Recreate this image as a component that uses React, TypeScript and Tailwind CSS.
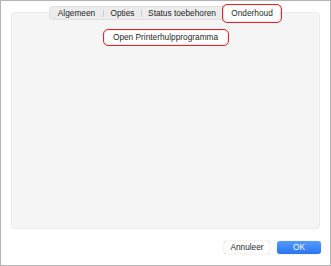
const tabs = [
  { label: "Algemeen", width: "w-[53px]" },
  { label: "Opties", width: "w-[37px]" },
  { label: "Status toebehoren", width: "w-[80px]" },
];

export default function App() {
  return (
    <div
      className="w-[331px] h-[266px] bg-white border border-[#b4b4b4] flex flex-col text-[#1f1f1f]"
      style={{ fontFamily: '"Liberation Sans", Arial, sans-serif' }}
    >
      <div className="ml-[10px] mt-[11px] w-[309px] h-[217px] rounded-[4px] bg-[#f5f5f5] border border-[#ebebeb] flex flex-col items-center">
        <div className="-mt-[7px] h-[14px] flex items-center rounded-[4px] bg-[#ececec] border border-[#e0e0e0] text-[8.3px]">
          {tabs.map((tab, i) => (
            <div key={tab.label} className="flex items-center h-full">
              {i > 0 && <div className="w-px h-[7px] bg-[#cfcfcf]" />}
              <div className={`${tab.width} text-center leading-none`}>{tab.label}</div>
            </div>
          ))}
          <div className="w-[56px] h-[15px] ml-[2px] mr-[1px] flex items-center justify-center bg-white rounded-[3px] shadow-[0_0_1px_rgba(0,0,0,0.35)] outline-[1.5px] outline-[#e3232a] outline-offset-[1.5px] leading-none">
            Onderhoud
          </div>
        </div>
        <button className="mt-[11px] w-[122px] h-[13px] bg-white rounded-[3px] shadow-[0_0_1px_rgba(0,0,0,0.4)] text-[8.3px] leading-none outline-[1.5px] outline-[#e3232a] outline-offset-[1.5px]">
          Open Printerhulpprogramma
        </button>
      </div>
      <div className="mt-[12px] w-[320px] flex justify-end gap-[7px]">
        <button className="w-[46px] h-[13px] bg-white rounded-[3px] shadow-[0_0_1px_rgba(0,0,0,0.45)] text-[8.3px] leading-none">
          Annuleer
        </button>
        <button className="w-[44px] h-[13px] rounded-[3px] bg-linear-to-b from-[#539bf9] to-[#2b74f1] text-white text-[8.3px] leading-none shadow-[0_0_1px_rgba(0,0,0,0.3)]">
          OK
        </button>
      </div>
    </div>
  );
}
